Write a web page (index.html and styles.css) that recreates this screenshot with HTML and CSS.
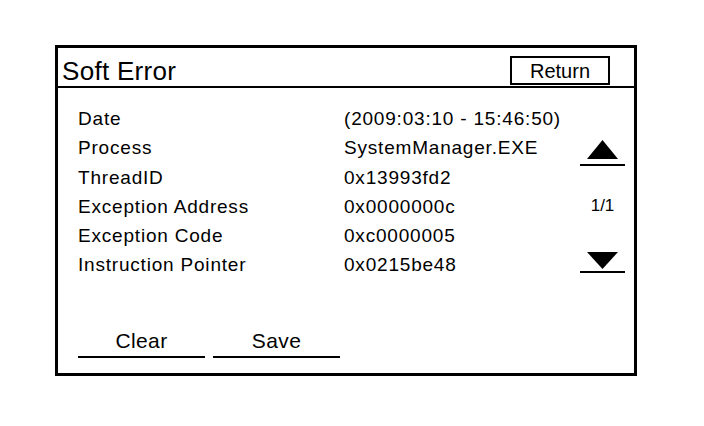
FILE: index.html
```html
<!DOCTYPE html>
<html lang="en">
<head>
    <meta charset="UTF-8">
    <meta name="viewport" content="width=device-width, initial-scale=1.0">
    <title>Soft Error</title>
    <link rel="stylesheet" href="styles.css">
</head>
<body>
    <div id="panel">
        <div id="header">
            <div id="title">Soft Error</div>
            <button id="returnBtn">Return</button>
        </div>

        <div id="content">
            <div id="details">
                <div class="label">Date</div>
                <div class="value">(2009:03:10 - 15:46:50)</div>
                <div class="label">Process</div>
                <div class="value">SystemManager.EXE</div>
                <div class="label">ThreadID</div>
                <div class="value">0x13993fd2</div>
                <div class="label">Exception Address</div>
                <div class="value">0x0000000c</div>
                <div class="label">Exception Code</div>
                <div class="value">0xc0000005</div>
                <div class="label">Instruction Pointer</div>
                <div class="value">0x0215be48</div>
            </div>

            <div id="pager">
                <button class="arrow up">
                    <svg width="31" height="19" viewBox="0 0 31 19"><polygon points="15.5,0 31,19 0,19" fill="#000"/></svg>
                </button>
                <div id="page">1/1</div>
                <button class="arrow down">
                    <svg width="31" height="17" viewBox="0 0 31 17"><polygon points="0,0 31,0 15.5,17" fill="#000"/></svg>
                </button>
            </div>
        </div>

        <div id="footer">
            <button class="action">Clear</button>
            <button class="action">Save</button>
        </div>
    </div>
</body>
</html>
```

FILE: styles.css
```css
body {
    margin: 0;
    background: #fff;
    font-family: "Liberation Sans", Arial, sans-serif;
    color: #000;
}

button {
    font-family: inherit;
    color: #000;
    background: none;
    border: none;
    padding: 0;
    margin: 0;
}

#panel {
    box-sizing: border-box;
    width: 582px;
    height: 331px;
    margin: 45px 0 0 55px;
    border: 3px solid #000;
    display: flex;
    flex-direction: column;
}

#header {
    display: flex;
    justify-content: space-between;
    height: 38px;
    border-bottom: 2px solid #000;
}

#title {
    padding: 9px 0 0 4px;
    font-size: 26px;
    line-height: 29px;
    letter-spacing: 0.3px;
}

#returnBtn {
    box-sizing: border-box;
    width: 100px;
    height: 29px;
    margin: 8px 24px 0 0;
    border: 2px solid #000;
    padding-top: 2px;
    font-size: 20px;
    line-height: 23px;
}

#content {
    display: flex;
    padding: 16px 9px 0 20px;
}

#details {
    flex: 1;
    display: grid;
    grid-template-columns: 266px 1fr;
    grid-auto-rows: 29.3px;
    font-size: 19px;
    line-height: 29.3px;
    letter-spacing: 0.8px;
}

#pager {
    width: 45px;
    display: flex;
    flex-direction: column;
    align-items: center;
}

.arrow {
    width: 45px;
    display: flex;
    justify-content: center;
    border-bottom: 2px solid #000;
}

.arrow svg {
    display: block;
}

.arrow.up {
    margin-top: 36px;
    padding-bottom: 5px;
}

#page {
    margin-top: 32px;
    font-size: 17px;
    line-height: 16px;
}

.arrow.down {
    margin-top: 38px;
    padding-bottom: 2px;
}

#footer {
    display: flex;
    gap: 8px;
    padding: 48px 0 0 20px;
}

.action {
    width: 127px;
    font-size: 21px;
    line-height: 26px;
    letter-spacing: 0.4px;
    padding-bottom: 2px;
    border-bottom: 2px solid #000;
}
```
